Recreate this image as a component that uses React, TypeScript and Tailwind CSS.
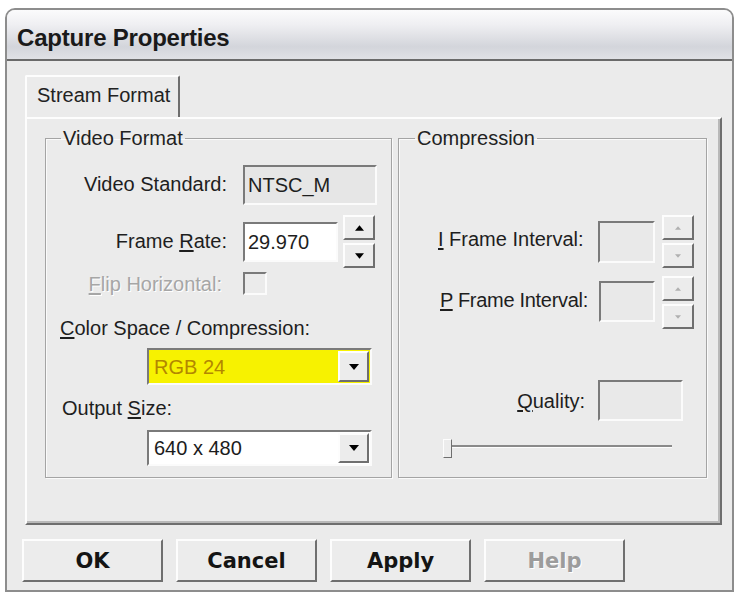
import React from "react";

const Tri = ({ up = false, color = "#000", w = 10 }: { up?: boolean; color?: string; w?: number }) => (
  <svg width={w} height={Math.round(w / 2) + 1} viewBox="0 0 10 6">
    <path d={up ? "M0 6L5 0L10 6Z" : "M0 0L10 0L5 6Z"} fill={color} />
  </svg>
);

const raised =
  "border-2 border-t-[#fdfdfd] border-l-[#fdfdfd] border-b-[#6f6f6f] border-r-[#6f6f6f]";
const sunken =
  "border-2 border-t-[#7a7a7a] border-l-[#7a7a7a] border-b-[#fbfbfb] border-r-[#fbfbfb]";

const Spin = ({ disabled = false }: { disabled?: boolean }) => (
  <div className="flex flex-col gap-[3px] w-[32px]">
    <div className={`${raised} h-[25px] bg-[#ececec] flex items-center justify-center`}>
      {disabled ? <Tri up color="#b0b0b0" w={6} /> : <Tri up w={9} />}
    </div>
    <div className={`${raised} h-[25px] bg-[#ececec] flex items-center justify-center`}>
      {disabled ? <Tri color="#b0b0b0" w={6} /> : <Tri w={9} />}
    </div>
  </div>
);

const Combo = ({ value, yellow = false, h }: { value: string; yellow?: boolean; h: string }) => (
  <div className={`${sunken} ${h} w-[225px] flex ${yellow ? "bg-[#f7f200]" : "bg-white"}`}>
    <div className={`flex-1 flex items-center pl-[5px] ${yellow ? "text-[#b38700]" : "text-[#1c1c1c]"}`}>{value}</div>
    <div className={`${raised} w-[31px] bg-[#ececec] flex items-center justify-center m-[1px]`}>
      <Tri w={10} />
    </div>
  </div>
);

export default function App() {
  return (
    <div className="w-[739px] h-[595px] bg-white pt-[8px] pl-[5px] font-['Liberation_Sans',Arial,sans-serif] text-[20px] leading-[24px] text-[#1e1e1e]">
      <div className="w-[729px] h-[584px] rounded-t-[10px] border-2 border-[#8d8d8d] bg-[#ebebeb] flex flex-col overflow-hidden">
        {/* Title bar */}
        <div className="h-[51px] shrink-0 border-b-2 border-[#6a6a6a] bg-[linear-gradient(to_bottom,#fbfbfc_0%,#efeff2_30%,#d3d5db_75%,#e0e1e5_100%)] flex items-center pl-[10px] pt-[6px]">
          <span className="font-bold text-[24px] tracking-[-0.2px] text-[#1a1a1a]">Capture Properties</span>
        </div>

        {/* Body */}
        <div className="flex flex-col pl-[15px] pt-[14px]">
          {/* Tab */}
          <div className="ml-[3px] w-[155px] h-[42px] border-t-2 border-l-2 border-r-2 border-t-[#fdfdfd] border-l-[#fdfdfd] border-r-[#6e6e6e] rounded-t-[2px] flex items-center pl-[10px] pb-[4px] text-[#222]">
            Stream Format
          </div>

          {/* Panel */}
          <div className="ml-[3px] w-[697px] h-[408px] border-t-2 border-l-2 border-r-2 border-b-2 border-t-[#fdfdfd] border-l-[#fdfdfd] border-r-[#6e6e6e] border-b-[#6e6e6e] shadow-[inset_-2px_-2px_0_#b9b9b9] flex pl-[18px] pt-[7px]">
            {/* Video Format */}
            <fieldset className="w-[347px] h-[352px] border border-[#a4a4a4] shadow-[inset_1px_1px_0_#fafafa,1px_1px_0_#fafafa] flex flex-col">
              <legend className="ml-[15px] px-[2px] text-[#222]">Video Format</legend>

              <div className="mt-[15px] flex items-center h-[40px]">
                <div className="w-[181px] text-right pb-[3px]">Video Standard:</div>
                <div className={`${sunken} ml-[16px] w-[134px] h-[40px] bg-[#e6e6e6] flex items-center pl-[3px]`}>NTSC_M</div>
              </div>

              <div className="mt-[10px] flex items-center h-[53px]">
                <div className="w-[181px] text-right pb-[2px]">
                  Frame <span className="underline underline-offset-[2px]">R</span>ate:
                </div>
                <div className={`${sunken} ml-[16px] w-[95px] h-[40px] bg-white flex items-center pl-[3px]`}>29.970</div>
                <div className="ml-[5px]">
                  <Spin />
                </div>
              </div>

              <div className="mt-[4px] flex items-center h-[23px]">
                <div className="w-[176px] text-right text-[#a6a6a6] [text-shadow:1px_1px_0_#ffffff]">
                  <span className="underline underline-offset-[2px]">F</span>lip Horizontal:
                </div>
                <div className={`${sunken} ml-[21px] w-[24px] h-[23px] bg-[#ebebeb]`} />
              </div>

              <div className="mt-[21px] pl-[14px] h-[24px]">
                <span className="underline underline-offset-[2px]">C</span>olor Space / Compression:
              </div>

              <div className="mt-[8px] ml-[101px]">
                <Combo value="RGB 24" yellow h="h-[37px]" />
              </div>

              <div className="mt-[11px] pl-[16px] h-[24px]">
                Output <span className="underline underline-offset-[2px]">S</span>ize:
              </div>

              <div className="mt-[10px] ml-[101px]">
                <Combo value="640 x 480" h="h-[36px]" />
              </div>
            </fieldset>

            {/* Compression */}
            <fieldset className="ml-[6px] w-[309px] h-[352px] border border-[#a4a4a4] shadow-[inset_1px_1px_0_#fafafa,1px_1px_0_#fafafa] flex flex-col">
              <legend className="ml-[16px] px-[2px] text-[#222]">Compression</legend>

              <div className="mt-[65px] flex items-center h-[53px]">
                <div className="w-[199px] pl-[39px] pb-[5px]">
                  <span className="underline underline-offset-[2px]">I</span> Frame Interval:
                </div>
                <div className={`${sunken} w-[57px] h-[42px] bg-[#e9e9e9]`} />
                <div className="ml-[7px]">
                  <Spin disabled />
                </div>
              </div>

              <div className="mt-[7px] flex items-center h-[55px]">
                <div className="w-[199px] pl-[41px] whitespace-nowrap tracking-[-0.3px] pb-[5px]">
                  <span className="underline underline-offset-[2px]">P</span> Frame Interval:
                </div>
                <div className={`${sunken} ml-[1px] w-[56px] h-[41px] bg-[#e9e9e9] -mt-[3px]`} />
                <div className="ml-[7px]">
                  <Spin disabled />
                </div>
              </div>

              <div className="mt-[50px] flex items-center h-[41px]">
                <div className="w-[186px] text-right">
                  <span className="underline underline-offset-[2px]">Q</span>uality:
                </div>
                <div className={`${sunken} ml-[13px] w-[85px] h-[41px] bg-[#e9e9e9]`} />
              </div>

              <div className="mt-[18px] ml-[44px] w-[229px] h-[20px] relative">
                <div className="absolute left-0 right-0 top-[6px] h-[3px] border-t-2 border-t-[#8a8a8a] border-b border-b-[#fdfdfd]" />
                <div className={`absolute left-0 top-0 w-[9px] h-[19px] ${raised} border-[1.5px] bg-[#ececec]`} />
              </div>
            </fieldset>
          </div>

          {/* Buttons */}
          <div className="mt-[14px] flex gap-[13px] font-['DejaVu_Sans',Verdana,sans-serif] font-bold text-[21px]">
            {["OK", "Cancel", "Apply", "Help"].map((b) => (
              <div
                key={b}
                className={`${raised} w-[141px] h-[43px] bg-[#ececec] flex items-center justify-center ${b === "Help" ? "text-[#9c9c9c] [text-shadow:1px_1px_0_#ffffff]" : "text-[#141414]"}`}
              >
                {b}
              </div>
            ))}
          </div>
        </div>
      </div>
    </div>
  );
}
